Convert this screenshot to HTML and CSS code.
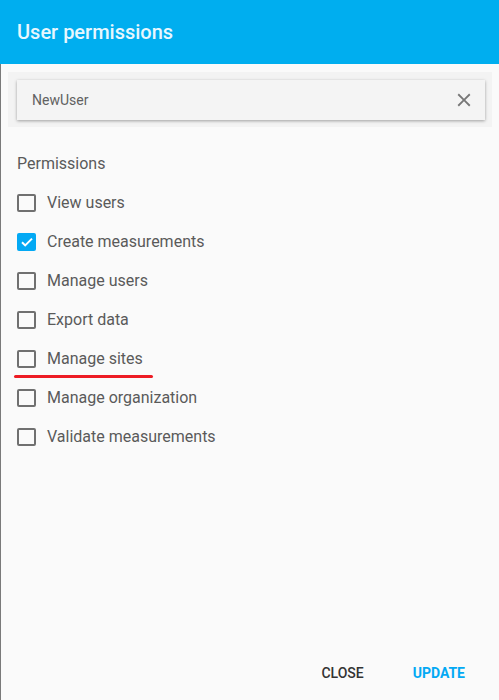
FILE: index.html
```html
<!DOCTYPE html>
<html>
<head>
<meta charset="utf-8">
<link rel="stylesheet" href="styles.css">
</head>
<body>
<header class="topbar">User permissions</header>
<main class="content">
  <div class="search">
    <div class="card">
      <span class="user">NewUser</span>
      <svg class="close-icon" width="22" height="22" viewBox="0 0 24 24"><path d="M19 6.41L17.59 5 12 10.59 6.41 5 5 6.41 10.59 12 5 17.59 6.41 19 12 13.41 17.59 19 19 17.59 13.41 12z" fill="#777"/></svg>
    </div>
  </div>
  <div class="section-label">Permissions</div>
  <ul class="perm-list">
    <li class="perm"><span class="box"></span><span>View users</span></li>
    <li class="perm"><span class="box checked"><svg width="18" height="18" viewBox="0 0 18 18"><path d="M4 9.2l3.2 3.2L14 5.6" fill="none" stroke="#fff" stroke-width="2"/></svg></span><span>Create measurements</span></li>
    <li class="perm"><span class="box"></span><span>Manage users</span></li>
    <li class="perm"><span class="box"></span><span>Export data</span></li>
    <li class="perm"><span class="box"></span><span>Manage sites</span><span class="mark"></span></li>
    <li class="perm"><span class="box"></span><span>Manage organization</span></li>
    <li class="perm"><span class="box"></span><span>Validate measurements</span></li>
  </ul>
  <footer class="actions">
    <button class="btn btn-close">Close</button>
    <button class="btn btn-update">Update</button>
  </footer>
</main>
</body>
</html>
```

FILE: styles.css
```css
* { box-sizing: border-box; }
html, body { margin: 0; padding: 0; }
body {
  height: 700px;
  display: flex;
  flex-direction: column;
  background: #fafafa;
  font-family: Roboto, "Liberation Sans", sans-serif;
  overflow: hidden;
}
.topbar {
  height: 64px;
  flex: none;
  background: #00aeef;
  color: #e8f7fe;
  font-size: 20px;
  font-weight: 500;
  padding-left: 17px;
  display: flex;
  align-items: center;
}
.content {
  flex: 1;
  display: flex;
  flex-direction: column;
  border-left: 1px solid #7a7a7a;
}
.search {
  margin: 8px 7px 0 7px;
  padding: 8px 7px 7px 9px;
  background: #f3f3f3;
}
.card {
  height: 40px;
  background: #f4f4f4;
  box-shadow: 0 1px 3px rgba(0,0,0,0.35);
  display: flex;
  align-items: center;
  justify-content: space-between;
  padding: 0 10px 0 15px;
}
.user {
  font-size: 14px;
  color: #616161;
}
.close-icon { display: block; }
.section-label {
  margin-top: 27px;
  padding-left: 16px;
  font-size: 16px;
  line-height: 20px;
  color: #5a5a5a;
}
.perm-list {
  list-style: none;
  margin: 0;
  padding: 9px 0 0 0;
}
.perm {
  position: relative;
  height: 39px;
  display: flex;
  align-items: center;
  padding-left: 16px;
  font-size: 16px;
  color: #5a5a5a;
}
.box {
  width: 19px;
  height: 18px;
  border: 2px solid #707070;
  border-radius: 2px;
  margin-right: 11px;
  flex: none;
  display: flex;
  align-items: center;
  justify-content: center;
}
.box.checked {
  background: #03a9f4;
  border-color: #03a9f4;
}
.box.checked svg { flex: none; }
.mark {
  position: absolute;
  left: 13px;
  top: 36px;
  width: 139px;
  height: 3px;
  border-radius: 2px;
  background: #ed1c24;
}
.actions {
  margin-top: auto;
  display: flex;
  justify-content: flex-end;
  gap: 17px;
  padding: 0 18px 9px 0;
}
.btn {
  height: 36px;
  padding: 0 16px;
  border: none;
  background: none;
  font-family: Roboto, "Liberation Sans", sans-serif;
  font-size: 14px;
  font-weight: 500;
  text-transform: uppercase;
}
.btn-close { color: #333; }
.btn-update { color: #03a9f4; font-weight: 700; }
```
